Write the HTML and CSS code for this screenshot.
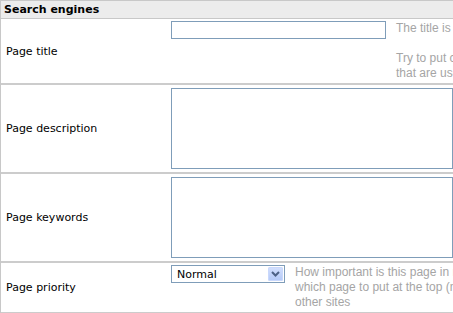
FILE: index.html
```html
<!DOCTYPE html>
<html lang="en">
<head>
  <meta charset="UTF-8">
  <title>Search engines</title>
  <link rel="stylesheet" href="styles.css">
</head>
<body>

<div class="panel">
  <div class="panel-head">Search engines</div>

  <div class="row">
    <label class="label" for="pageTitle">Page title</label>
    <div class="field">
      <input type="text" id="pageTitle" class="text-input">
      <div class="help">
        The title is shown in the title bar of the browser<br>
        &nbsp;<br>
        Try to put common keywords in the title<br>
        that are used by people searching for this page
      </div>
    </div>
  </div>

  <div class="row">
    <label class="label" for="pageDescription">Page description</label>
    <div class="field">
      <textarea id="pageDescription" class="area"></textarea>
    </div>
  </div>

  <div class="row">
    <label class="label" for="pageKeywords">Page keywords</label>
    <div class="field">
      <textarea id="pageKeywords" class="area"></textarea>
    </div>
  </div>

  <div class="row last">
    <span class="label">Page priority</span>
    <div class="field">
      <div class="select">
        <span class="select-value">Normal</span>
        <span class="select-btn">
          <svg width="15" height="14" viewBox="0 0 15 14">
            <path d="M4 5 L7.5 8.5 L11 5" fill="none" stroke="#4d6185" stroke-width="2"/>
          </svg>
        </span>
      </div>
      <div class="help">
        How important is this page in relation to the others<br>
        which page to put at the top (most important) when<br>
        other sites
      </div>
    </div>
  </div>
</div>

</body>
</html>
```

FILE: styles.css
```css
body {
  margin: 0;
  padding: 0;
  overflow: hidden;
  background: #fff;
  font-family: "DejaVu Sans", Verdana, sans-serif;
  font-size: 11px;
  color: #000;
}
.panel {
  width: 700px;
  border-top: 1px solid #c8c8c8;
  border-left: 1px solid #c8c8c8;
}
.panel-head {
  height: 17px;
  line-height: 17px;
  padding-left: 3px;
  background-color: #ececec;
  border-bottom: 1px solid #c8c8c8;
  font-weight: bold;
}
.row {
  display: grid;
  grid-template-columns: 170px 1fr;
  align-items: center;
  padding: 2px 0;
  border-bottom: 2px solid #cccccc;
}
.row.last {
  border-bottom-width: 1px;
}
.label {
  padding-left: 5px;
}
.field {
  display: flex;
  align-items: flex-start;
  gap: 10px;
}
.text-input {
  width: 215px;
  height: 18px;
  margin: 0;
  padding: 0 2px;
  box-sizing: border-box;
  border: 1px solid #7f9db9;
}
.area {
  display: block;
  width: 282px;
  height: 81px;
  margin: 1px 0;
  padding: 2px;
  box-sizing: border-box;
  border: 1px solid #7f9db9;
  resize: none;
}
.help {
  font-family: "Liberation Sans", Arial, sans-serif;
  font-size: 12px;
  line-height: 15px;
  color: #a5a5a5;
  white-space: nowrap;
}
.select {
  display: flex;
  align-items: center;
  justify-content: space-between;
  width: 114px;
  height: 18px;
  box-sizing: border-box;
  border: 1px solid #7f9db9;
  padding: 0 1px 0 5px;
}
.select-value {
  font-size: 11px;
}
.select-btn {
  display: flex;
  width: 15px;
  height: 14px;
  border-radius: 2px;
  background: linear-gradient(#d4e0fd, #b3c8f7);
  box-shadow: inset 0 0 0 1px #c9d8fc;
}
```
